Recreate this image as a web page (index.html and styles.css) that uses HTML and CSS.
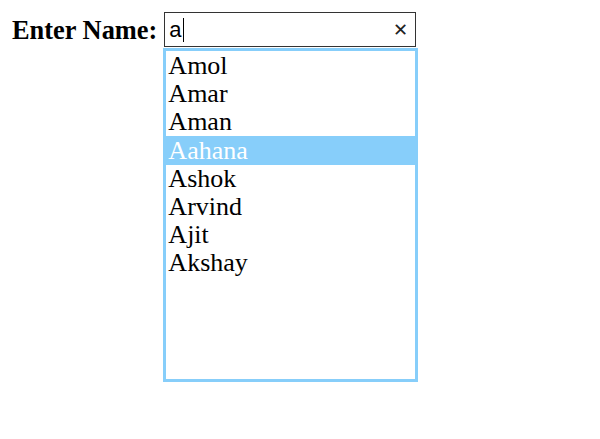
FILE: index.html
```html
<!DOCTYPE html>
<html lang="en">
<head>
    <meta charset="UTF-8">
    <meta name="viewport" content="width=device-width, initial-scale=1.0">
    <title>Autocomplete</title>
    <link rel="stylesheet" href="styles.css">
</head>
<body>
    <div class="row">
        <label for="name">Enter Name:</label>
        <div class="combo">
            <div class="search">
                <span class="value" id="name">a</span><span class="caret"></span>
                <span class="clear">&#x2715;</span>
            </div>
            <ul class="list">
                <li>Amol</li>
                <li>Amar</li>
                <li>Aman</li>
                <li class="active">Aahana</li>
                <li>Ashok</li>
                <li>Arvind</li>
                <li>Ajit</li>
                <li>Akshay</li>
            </ul>
        </div>
    </div>
</body>
</html>
```

FILE: styles.css
```css
body {
    margin: 0;
    background: #fff;
    font-family: "Liberation Serif", "Times New Roman", serif;
    color: #000;
}
.row {
    display: flex;
    align-items: flex-start;
    gap: 6px;
    padding: 12px 0 0 12px;
}
label {
    font-weight: bold;
    font-size: 26.4px;
    line-height: 37px;
}
.combo {
    width: 255px;
}
.search {
    display: flex;
    align-items: center;
    height: 35px;
    margin: 0 2px 0 1px;
    padding: 0 4px;
    border: 1px solid #333;
    box-sizing: border-box;
    font-family: "Liberation Sans", Arial, sans-serif;
    font-size: 22px;
}
.caret {
    width: 1px;
    height: 24px;
    background: #000;
    margin-left: 1px;
}
.clear {
    margin-left: auto;
    margin-right: 3px;
    font-size: 18px;
    color: #222;
}
.list {
    list-style: none;
    margin: 1px 0 0;
    padding: 1px 0 0;
    height: 334px;
    border: 3px solid #87cefa;
    box-sizing: border-box;
}
.list li {
    font-size: 26px;
    line-height: 28px;
    padding-left: 2px;
}
.list li.active {
    background: #87cefa;
    color: #fff;
    line-height: 29px;
}
```
